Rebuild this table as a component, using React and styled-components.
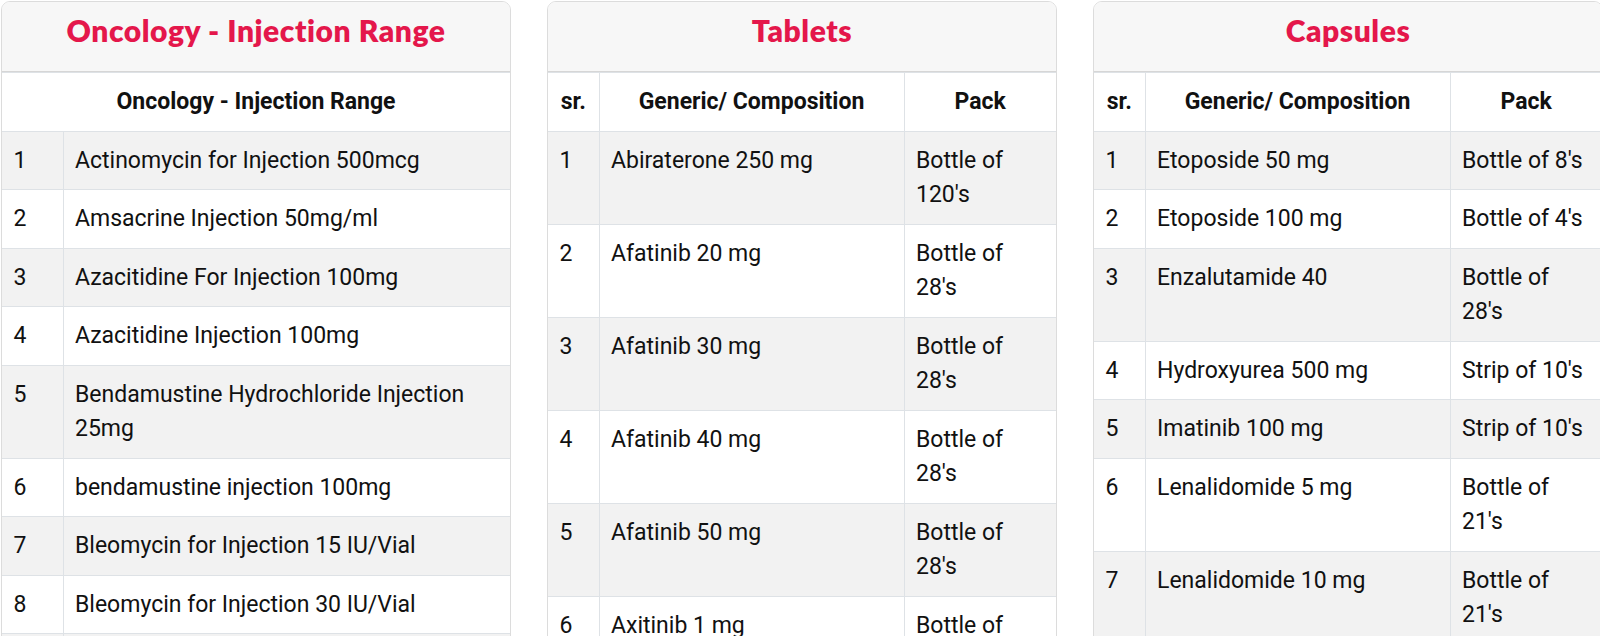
import React from "react";
import styled, { createGlobalStyle } from "styled-components";

const Global = createGlobalStyle`
  html, body { margin: 0; padding: 0; background: #fff; overflow: hidden; }
  body { font-family: Roboto, "Liberation Sans", Arial, sans-serif; color: #111; }
  * { box-sizing: border-box; }
`;

const Page = styled.div`
  display: flex;
  align-items: flex-start;
  gap: 36px;
  padding: 1px 0 0 1px;
  width: 1700px;
`;

const Card = styled.section`
  flex: 0 0 510px;
  width: 510px;
  border: 1px solid #dcdcdc;
  border-radius: 9px 9px 0 0;
  overflow: hidden;
  background: #fff;
`;

const CardHeader = styled.header`
  height: 70px;
  background: #f7f7f7;
  border-bottom: 1px solid #d6d6d6;
  text-align: center;
  padding-top: 10px;
`;

const Title = styled.h2`
  margin: 0;
  font-family: Lato, "Open Sans", sans-serif;
  font-weight: 800;
  font-size: 30px;
  line-height: 36px;
  color: #e4174b;
  letter-spacing: 0.55px;
`;

const Table = styled.table`
  width: 100%;
  border-collapse: collapse;
  table-layout: fixed;
`;

const Th = styled.th`
  font-weight: 700;
  font-size: 23px;
  line-height: 34.5px;
  padding: 12px 11.5px 11px;
  text-align: center;
  vertical-align: top;
  border-top: 1px solid #dee2e6;
  border-left: 1px solid #dee2e6;
  color: #111;
  &:first-child { border-left: none; }
`;

const Td = styled.td`
  font-size: 23px;
  line-height: 34.5px;
  padding: 12px 11.5px 11px;
  text-align: left;
  vertical-align: top;
  border-top: 1px solid #dee2e6;
  border-left: 1px solid #dee2e6;
  &:first-child { border-left: none; }
`;

const Row = styled.tr`
  background: ${(p) => (p.$striped ? "#f2f2f2" : "#fff")};
`;

const injections = [
  "Actinomycin for Injection 500mcg",
  "Amsacrine Injection 50mg/ml",
  "Azacitidine For Injection 100mg",
  "Azacitidine Injection 100mg",
  "Bendamustine Hydrochloride Injection 25mg",
  "bendamustine injection 100mg",
  "Bleomycin for Injection 15 IU/Vial",
  "Bleomycin for Injection 30 IU/Vial",
  "Bortezomib for Injection 2mg",
];

const tablets = [
  ["Abiraterone 250 mg", "Bottle of 120's"],
  ["Afatinib 20 mg", "Bottle of 28's"],
  ["Afatinib 30 mg", "Bottle of 28's"],
  ["Afatinib 40 mg", "Bottle of 28's"],
  ["Afatinib 50 mg", "Bottle of 28's"],
  ["Axitinib 1 mg", "Bottle of 28's"],
];

const capsules = [
  ["Etoposide 50 mg", "Bottle of 8's"],
  ["Etoposide 100 mg", "Bottle of 4's"],
  ["Enzalutamide 40", "Bottle of 28's"],
  ["Hydroxyurea 500 mg", "Strip of 10's"],
  ["Imatinib 100 mg", "Strip of 10's"],
  ["Lenalidomide 5 mg", "Bottle of 21's"],
  ["Lenalidomide 10 mg", "Bottle of 21's"],
];

function ProductCard({ title, rows }) {
  return (
    <Card>
      <CardHeader>
        <Title>{title}</Title>
      </CardHeader>
      <Table>
        <colgroup>
          <col style={{ width: 51 }} />
          <col style={{ width: 305 }} />
          <col style={{ width: 152 }} />
        </colgroup>
        <thead>
          <Row>
            <Th>sr.</Th>
            <Th>Generic/ Composition</Th>
            <Th>Pack</Th>
          </Row>
        </thead>
        <tbody>
          {rows.map(([name, pack], i) => (
            <Row key={i} $striped={i % 2 === 0}>
              <Td>{i + 1}</Td>
              <Td>{name}</Td>
              <Td>{pack}</Td>
            </Row>
          ))}
        </tbody>
      </Table>
    </Card>
  );
}

export default function App() {
  return (
    <>
      <Global />
      <Page>
        <Card>
          <CardHeader>
            <Title>Oncology - Injection Range</Title>
          </CardHeader>
          <Table>
            <colgroup>
              <col style={{ width: 61 }} />
              <col style={{ width: 447 }} />
            </colgroup>
            <thead>
              <Row>
                <Th colSpan={2}>Oncology - Injection Range</Th>
              </Row>
            </thead>
            <tbody>
              {injections.map((name, i) => (
                <Row key={i} $striped={i % 2 === 0}>
                  <Td>{i + 1}</Td>
                  <Td>{name}</Td>
                </Row>
              ))}
            </tbody>
          </Table>
        </Card>
        <ProductCard title="Tablets" rows={tablets} />
        <ProductCard title="Capsules" rows={capsules} />
      </Page>
    </>
  );
}
